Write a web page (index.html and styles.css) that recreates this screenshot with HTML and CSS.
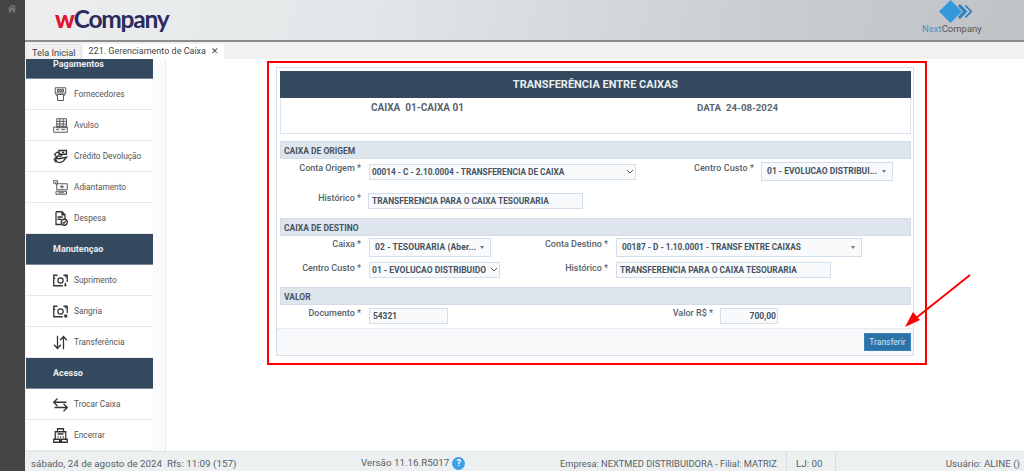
FILE: index.html
```html
<!DOCTYPE html>
<html lang="pt-BR">
<head>
<meta charset="utf-8">
<title>Gerenciamento de Caixa</title>
<link rel="stylesheet" href="styles.css">
</head>
<body>
<div class="app">
  <aside class="rail">
    <svg class="home" viewBox="0 0 16 14"><path d="M8 1 0.5 7.500l1 1L8 3l6.500 5.500 1-1L12.500 5V1.500h-2v1.700zM3 8.500V13.500h3.500V10h3v3.500H13V8.500L8 4.300z"/></svg>
  </aside>
  <div class="shell">
    <header class="top">
      <div class="brand"><span class="brand-w">w</span>Company</div>
      <div class="next">
        <svg class="next-mark" viewBox="0 0 34 23"><path class="d1" d="M11.500 0 23 11.500 11.500 23 0 11.500z"/><path class="d2" d="M21 4l7.500 7.500L21 19l-2-2 5-5.500-5-5.500z"/><path class="d2" d="M27 5l6.500 6.500L27 18l-1.200-1.200 5.300-5.300-5.300-5.300z"/></svg>
        <div class="next-name"><span class="next-blue">Next</span>Company</div>
      </div>
    </header>
    <nav class="tabs">
      <div class="tab">Tela Inicial</div>
      <div class="tab tab-on">221. Gerenciamento de Caixa <span class="tab-x">✕</span></div>
    </nav>
    <div class="work">
      <div class="side">
        <div class="side-head side-head-cut">Pagamentos</div>
        <div class="side-item"><span class="ico"><svg viewBox="0 0 20 20"><path class="s" d="M3 1h14v7H3zM6 3h2v3H6zM9 3h2v3H9zM12 3h2v3h-2zM6 10h8v8H6zM3 8l3 5M17 8l-3 5"/></svg></span>Fornecedores</div>
        <div class="side-item"><span class="ico"><svg viewBox="0 0 20 20"><path class="s" d="M5 1h13v12H5zM5 4.500h13M5 8h13M5 11h13M9 1v12M13.500 1v12M1 12h18v7H1zM4 15.500h4M11 15.500h5"/></svg></span>Avulso</div>
        <div class="side-item"><span class="ico"><svg viewBox="0 0 20 20"><path class="b" d="M8 2h10v5H8zM12 4.500h3M2 7l4-3 3 2 3 2-2 2-3-1-2 2zM3 12l5 1 5-1 5-1-4 5-5 2-4-1zM1 13l3 5"/></svg></span>Crédito Devolução</div>
        <div class="side-item"><span class="ico"><svg viewBox="0 0 20 20"><path class="s" d="M0 1h6v3H0zM5 5h14v8H5zM9 9h6M12 6.500v5M3 4l2 3M4 15h14v4H4zM7 17h8"/></svg></span>Adiantamento</div>
        <div class="side-item"><span class="ico"><svg viewBox="0 0 20 20"><path class="b" d="M4 1h8l4 4v6M4 1v17h7M12 1v4h4M6 8h7M6 11h5"/><circle class="b" cx="15" cy="15" r="4"/><path class="b" d="M13 15l1.500 1.500 2.500-3"/></svg></span>Despesa</div>
        <div class="side-head">Manutençao</div>
        <div class="side-item"><span class="ico"><svg viewBox="0 0 20 20"><path class="b" d="M6 3H1v14h12M14 3h5v9M1 7h2M17 3v3"/><circle class="b" cx="10" cy="10" r="3.500"/><path class="b" d="M16.500 13v4"/><path class="f" d="M14.500 15.500h4l-2 3z"/></svg></span>Suprimento</div>
        <div class="side-item"><span class="ico"><svg viewBox="0 0 20 20"><path class="b" d="M6 3H1v14h12M14 3h5v9M1 7h2M17 3v3"/><circle class="b" cx="10" cy="10" r="3.500"/><path class="f" d="M15 14h4v4h-4z"/></svg></span>Sangria</div>
        <div class="side-item"><span class="ico"><svg viewBox="0 0 20 20"><path class="b" d="M6 1v17M1.500 13 6 18l4.500-5M14 19V2M9.500 7 14 2l4.500 5"/></svg></span>Transferência</div>
        <div class="side-head">Acesso</div>
        <div class="side-item"><span class="ico"><svg viewBox="0 0 20 20"><path class="b" d="M1 7h17M6 2 1 7l5 5M19 14H2M14 9l5 5-5 5"/></svg></span>Trocar Caixa</div>
        <div class="side-item"><span class="ico"><svg viewBox="0 0 20 20"><path class="b" d="M6 1h8v4H6zM3 5h14v10H3zM6 8h8M1 15h18v4H1zM8 17h4M6 12h1.500M9.500 12H11M13 12h1.500"/></svg></span>Encerrar</div>
      </div>
      <div class="gutter"></div>
      <main class="main">
        <section class="panel">
          <div class="panel-body">
            <h1 class="title">TRANSFERÊNCIA ENTRE CAIXAS</h1>
            <div class="info">
              <span class="info-caixa">CAIXA &nbsp;01-CAIXA 01</span>
              <span class="info-data">DATA &nbsp;24-08-2024</span>
            </div>

            <h2 class="sec sec-origem">CAIXA DE ORIGEM</h2>
            <div class="row r-o1">
              <label class="lab lab-a">Conta Origem *</label>
              <div class="ctl sel w-o1">00014 - C - 2.10.0004 - TRANSFERENCIA DE CAIXA<svg class="chev" viewBox="0 0 8 5"><path d="M1 1l3 3 3-3"/></svg></div>
              <label class="lab lab-o2">Centro Custo *</label>
              <div class="ctl combo w-o2">01 - EVOLUCAO DISTRIBUI...<span class="caret"></span></div>
            </div>
            <div class="row r-o2">
              <label class="lab lab-a">Histórico *</label>
              <div class="ctl inp w-o3">TRANSFERENCIA PARA O CAIXA TESOURARIA</div>
            </div>

            <h2 class="sec sec-dest">CAIXA DE DESTINO</h2>
            <div class="row r-d1">
              <label class="lab lab-a">Caixa *</label>
              <div class="ctl combo w-d1">02 - TESOURARIA (Aber...<span class="caret"></span></div>
              <label class="lab lab-d2">Conta Destino *</label>
              <div class="ctl combo w-d2">00187 - D - 1.10.0001 - TRANSF ENTRE CAIXAS<span class="caret"></span></div>
            </div>
            <div class="row r-d2">
              <label class="lab lab-a">Centro Custo *</label>
              <div class="ctl sel w-d3">01 - EVOLUCAO DISTRIBUIDO<svg class="chev" viewBox="0 0 8 5"><path d="M1 1l3 3 3-3"/></svg></div>
              <label class="lab lab-d4">Histórico *</label>
              <div class="ctl inp w-d4">TRANSFERENCIA PARA O CAIXA TESOURARIA</div>
            </div>

            <h2 class="sec sec-valor">VALOR</h2>
            <div class="row r-v">
              <label class="lab lab-a">Documento *</label>
              <div class="ctl inp w-v1">54321</div>
              <label class="lab lab-v2">Valor R$ *</label>
              <div class="ctl inp num w-v2">700,00</div>
            </div>
          </div>
          <div class="actions"><button class="btn" type="button">Transferir</button></div>
        </section>
      </main>
    </div>
    <footer class="foot">
      <div class="f-date">sábado, 24 de agosto de 2024 &nbsp;Rfs: 11:09 (157)</div>
      <div class="f-ver">Versão 11.16.R5017<span class="help">?</span></div>
      <div class="f-emp">Empresa: NEXTMED DISTRIBUIDORA - Filial: MATRIZ</div>
      <div class="f-lj">LJ: 00</div>
      <div class="f-user">Usuário: ALINE ()</div>
    </footer>
  </div>
</div>
<div class="mark-box"></div>
<svg class="mark-arrow" viewBox="0 0 80 70"><path class="mark-line" d="M71 2 12 49"/><path class="mark-head" d="M6 54 21 47 14 39z"/></svg>
</body>
</html>
```
FILE: styles.css
```css
* { box-sizing: border-box; }
html, body { margin: 0; height: 471px; overflow: hidden; background: #fff; }
body { font-family: Roboto, "Liberation Sans", sans-serif; color: #555; }
.app { display: flex; height: 471px; }

.rail { width: 25px; flex: none; background: #444; padding: 4px 0 0 7px; }
.home { display: block; width: 10px; height: 9px; fill: #777; }

.shell { flex: 1; display: flex; flex-direction: column; min-width: 0; }

.top { height: 42px; flex: none; display: flex; justify-content: space-between; background: linear-gradient(100deg, #eceeee 0%, #e3e6e8 35%, #c9cdd0 75%, #bfc3c6 100%); border-bottom: 2px solid #8c8c8c; }
.brand { margin: 1px 0 0 30px; font-family: Lato, sans-serif; font-weight: 700; font-size: 24.500px; letter-spacing: -1.200px; line-height: 36px; color: #2b2a5e; }
.brand-w { color: #e2122e; font-weight: 900; }
.next { width: 59px; margin: 0 43px 0 0; display: flex; flex-direction: column; align-items: flex-start; }
.next-mark { width: 34px; height: 23px; margin-left: 17px; flex: none; }
.d1 { fill: #3498db; }
.d2 { fill: #2d7fc0; }
.next-name { font-size: 9.500px; line-height: 11px; color: #555; white-space: nowrap; }
.next-blue { color: #4a8fc0; }

.tabs { height: 17px; flex: none; display: flex; align-items: flex-end; background: #f1f1f1; padding-left: 1px; gap: 2px; }
.tab { height: 15px; padding: 0 4px 0 5px; font-size: 9.200px; line-height: 15px; color: #444; background: #f1f1f1; border: 1px solid #e6e6e6; border-bottom: 0; }
.tab-on { background: #fff; border: 0; padding: 0 5px 0 6px; font-size: 9px; }
.tab-x { margin-left: 3px; font-size: 8.500px; }

.work { height: 392px; flex: none; display: flex; }
.side { width: 128px; flex: none; padding-left: 1px; background: #f3f4f5; overflow: hidden; }
.side-head { height: 31px; padding-left: 27px; font-size: 9px; font-weight: 700; line-height: 30px; color: #e8edf2; background: #34495e; border-bottom: 1px solid #7a8a9a; }
.side-head-cut { height: 20px; line-height: 10px; }
.side-item { height: 31px; display: flex; align-items: center; padding: 0 0 0 27px; font-size: 8.300px; color: #555; background: #fff; border-bottom: 1px solid #e9e9e9; }
.ico { width: 21px; height: 15px; flex: none; }
.ico svg { display: block; width: 15px; height: 15px; }
.s { fill: none; stroke: #555; stroke-width: 1.300; }
.b { fill: none; stroke: #333; stroke-width: 1.700; }
.f { fill: #333; }

.gutter { width: 13px; flex: none; background: #fafbfc; border-right: 1px solid #e6ebf2; }
.main { flex: 1; background: #fff; padding: 8px 0 0 110px; }

.panel { width: 638px; height: 289px; border: 1px solid #d5dfea; display: flex; flex-direction: column; }
.panel-body { flex: 1; padding: 3px 2px 0 3px; }
.title { margin: 0; height: 27px; background: #34495e; color: #e9eef3; font-size: 11px; font-weight: 700; line-height: 27px; text-align: center; }
.info { height: 36px; border: 1px solid #dbe4ee; border-top: 0; font-size: 10px; font-weight: 700; color: #5a6470; display: flex; padding: 4px 0 0 90px; line-height: 12px; }
.info-caixa { width: 326px; }
.info-data { font-size: 9.700px; }
.sec { margin: 0; height: 18px; line-height: 18px; padding-left: 3px; background: #dfe5ec; border: 1px solid #d3dde9; font-size: 8.500px; font-weight: 700; color: #46525f; }
.sec-origem { margin-top: 7px; }
.sec-dest { margin-top: 9px; }
.sec-valor { margin-top: 6px; }

.row { display: flex; align-items: flex-start; }
.lab { flex: none; font-size: 9px; font-weight: 500; line-height: 12px; color: #565f69; text-align: right; white-space: nowrap; }
.lab-a { width: 81px; margin-right: 8px; }
.ctl { flex: none; position: relative; font-size: 8.500px; font-weight: 700; color: #46525f; white-space: nowrap; background: #f8fafc; border: 1px solid #d3deeb; }
.sel { height: 16px; line-height: 14px; padding-left: 2px; }
.combo { height: 19px; line-height: 17px; padding-left: 5px; }
.inp { height: 16px; line-height: 14px; padding-left: 3px; font-size: 8.400px; }
.num { text-align: right; padding-right: 1px; font-size: 8.500px; }
.chev { position: absolute; right: 1px; top: 4px; width: 8px; height: 5px; fill: none; stroke: #555; stroke-width: 1; }
.caret { position: absolute; right: 6px; top: 7px; border: 2.500px solid transparent; border-top: 3px solid #777; }

.r-o1 { margin-top: 3px; height: 31px; }
.r-o1 .sel { margin-top: 2px; }
.w-o1 { width: 267px; font-size: 8.250px; }
.lab-o2 { width: 118px; margin-right: 7px; letter-spacing: 0.08px; }
.w-o2 { width: 132px; }
.r-o2 { height: 16px; }
.r-o2 .lab-a { margin: -1px 7px 0 0; }
.w-o3 { width: 215px; }

.r-d1 { margin-top: 2px; height: 24px; }
.w-d1 { width: 122px; letter-spacing: 0.1px; }
.lab-d2 { width: 117px; margin-right: 8px; }
.w-d2 { width: 246px; font-size: 8.250px; }
.r-d2 { height: 19px; }
.w-d3 { width: 131px; }
.lab-d4 { width: 108px; margin-right: 8px; }
.w-d4 { width: 215px; }

.r-v { margin-top: 3px; }
.r-v .lab { margin-top: -1px; }
.w-v1 { width: 79px; }
.lab-v2 { width: 265px; margin-right: 7px; }
.w-v2 { width: 58px; }

.actions { height: 27px; flex: none; display: flex; justify-content: flex-end; align-items: flex-start; padding: 4px 2px 0 0; background: #f7f8fa; border-top: 1px solid #e6eaef; }
.btn { width: 47px; height: 18px; padding: 0; font: 8.500px Roboto, sans-serif; color: #d5e6f3; background: #2a72a8; border: 1px solid #3a85bb; }

.foot { height: 20px; flex: none; display: flex; background: #ecf0f1; border-top: 1px solid #e3e6e8; font-size: 9.800px; line-height: 24px; color: #5a5f63; }
.f-date { width: 336px; padding-left: 6px; }
.f-ver { width: 199px; line-height: 21px; white-space: nowrap; }
.help { display: inline-block; width: 13px; height: 13px; border-radius: 50%; background: #3ea0e6; color: #fff; font-size: 9px; font-weight: 700; line-height: 13px; text-align: center; margin-left: 3px; }
.f-emp { width: 226px; white-space: nowrap; font-size: 9.300px; }
.f-lj { width: 50px; padding-left: 9px; border-left: 1px solid #d9dcde; border-right: 1px solid #d9dcde; }
.f-user { flex: 1; text-align: right; padding-right: 4px; }

.mark-box { position: absolute; left: 267px; top: 61px; width: 660px; height: 304px; border: 2px solid #f00; pointer-events: none; }
.mark-arrow { position: absolute; left: 899px; top: 273px; width: 80px; height: 70px; }
.mark-line { fill: none; stroke: #f00; stroke-width: 2; }
.mark-head { fill: #f00; }
```
